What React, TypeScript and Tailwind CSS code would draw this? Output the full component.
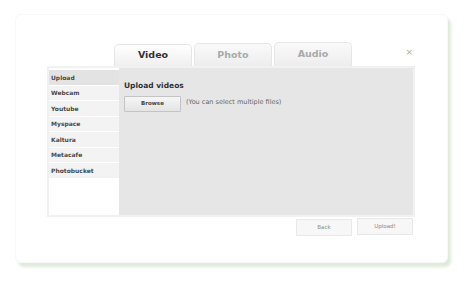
import React from "react";

const sources = ["Upload", "Webcam", "Youtube", "Myspace", "Kaltura", "Metacafe", "Photobucket"];

function Tab({ label, active, h }: { label: string; active?: boolean; h: string }) {
  return (
    <div
      className={`w-[78px] ${h} rounded-t-[5px] border border-b-0 border-[#e6e6e6] flex items-center justify-center text-[9.5px] font-bold ${
        active ? "bg-gradient-to-b from-[#ffffff] to-[#efefef] text-[#333]" : "bg-gradient-to-b from-[#fafafa] to-[#ededed] text-[#aaa]"
      }`}
    >
      {label}
    </div>
  );
}

export default function App() {
  return (
    <div className="w-[465px] h-[283px] bg-white overflow-hidden" style={{ fontFamily: '"DejaVu Sans", Verdana, sans-serif' }}>
      <div className="ml-[15px] mt-[14px] w-[433px] h-[249px] bg-white rounded-[6px] border border-[#f8f8f8] shadow-[3px_4px_3px_rgba(150,185,135,0.3)] pl-[31px] pr-[32px] pt-[27px] flex flex-col">
        <div className="flex items-end gap-[2px] pl-[67px]">
          <Tab label="Video" active h="h-[22px]" />
          <Tab label="Photo" h="h-[23px]" />
          <Tab label="Audio" h="h-[24px]" />
          <div className="ml-auto mr-[2px] self-start mt-[6px] text-[9px] leading-none text-[#aaa]">×</div>
        </div>
        <div className="h-[151px] border-2 border-[#f1f1f1] bg-white flex">
          <div className="w-[70px] pt-[2px] flex flex-col gap-[1px]">
            {sources.map((s, i) => (
              <div
                key={s}
                className={`h-[14.5px] flex items-center pl-[2px] text-[6px] font-bold text-[#4a4a4a] ${
                  i === 0 ? "bg-[#e3e3e3]" : "bg-[#f3f3f3]"
                }`}
              >
                {s}
              </div>
            ))}
          </div>
          <div className="flex-1 bg-[#e6e6e6] pl-[5px] pt-[14px]">
            <div className="text-[7.5px] font-bold text-[#333] leading-none">Upload videos</div>
            <div className="flex items-center gap-[5px] mt-[6px]">
              <div className="w-[57px] h-[16px] rounded-[1px] border border-[#c4c4c4] bg-gradient-to-b from-[#f6f6f6] to-[#e4e4e4] flex items-center justify-center text-[5.5px] font-bold text-[#444]">
                Browse
              </div>
              <span className="text-[6.5px] text-[#666] -mt-[2px]">(You can select multiple files)</span>
            </div>
          </div>
        </div>
        <div className="flex justify-end gap-[5px] mt-[2px] mr-[2px]">
          <div className="w-[56px] h-[17px] border border-[#e8e8e8] bg-[#f7f7f7] flex items-center justify-center text-[5.5px] text-[#8a8a8a]">
            Back
          </div>
          <div className="w-[56px] h-[17px] -mt-[1px] border border-[#e8e8e8] bg-[#f7f7f7] flex items-center justify-center text-[5.5px] text-[#8a8a8a]">
            Upload!
          </div>
        </div>
      </div>
    </div>
  );
}
